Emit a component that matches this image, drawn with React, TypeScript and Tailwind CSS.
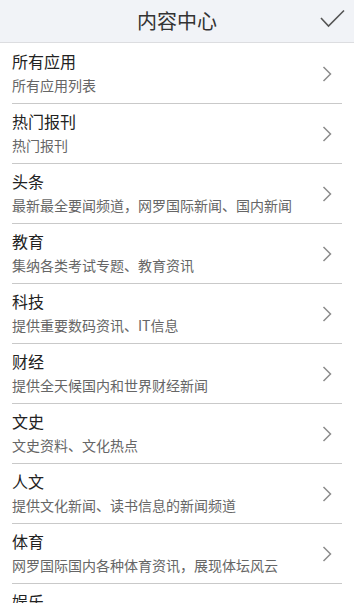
import React from "react";

const items: [string, string][] = [
  ["所有应用", "所有应用列表"],
  ["热门报刊", "热门报刊"],
  ["头条", "最新最全要闻频道，网罗国际新闻、国内新闻"],
  ["教育", "集纳各类考试专题、教育资讯"],
  ["科技", "提供重要数码资讯、IT信息"],
  ["财经", "提供全天候国内和世界财经新闻"],
  ["文史", "文史资料、文化热点"],
  ["人文", "提供文化新闻、读书信息的新闻频道"],
  ["体育", "网罗国际国内各种体育资讯，展现体坛风云"],
  ["娱乐", "娱乐新闻"],
];

function Chevron() {
  return (
    <svg width="10" height="16" viewBox="0 0 10 16" className="shrink-0">
      <polyline
        points="1.5,1 8.5,8 1.5,15"
        fill="none"
        stroke="#8c8c8c"
        strokeWidth="1.5"
      />
    </svg>
  );
}

export default function App() {
  return (
    <div
      className="w-[354px] h-[603px] overflow-hidden bg-white"
      style={{ fontFamily: '"Noto Sans CJK SC", "Noto Sans", sans-serif' }}
    >
      <header className="relative h-[43px] bg-[#f1f3f7] border-b border-[#dcdde0] flex items-center justify-center">
        <span className="text-[20px] leading-none text-[#333333]">内容中心</span>
        <svg
          width="26"
          height="20"
          viewBox="0 0 26 20"
          className="absolute right-[8px] top-[9px]"
        >
          <polyline
            points="1,9 8.5,17 24,1.5"
            fill="none"
            stroke="#555555"
            strokeWidth="1.6"
          />
        </svg>
      </header>
      <ul className="mt-px px-3">
        {items.map(([t, s]) => (
          <li
            key={t}
            className="h-[60px] border-b border-[#c9c9c9] flex items-center"
          >
            <div className="flex-1 min-w-0 self-start pt-[6px]">
              <div className="text-[16px] leading-[22px] text-[#222222]">{t}</div>
              <div className="mt-[1px] text-[14px] leading-[24px] text-[#666666] whitespace-nowrap">
                {s}
              </div>
            </div>
            <div className="pr-[10px]">
              <Chevron />
            </div>
          </li>
        ))}
      </ul>
    </div>
  );
}
